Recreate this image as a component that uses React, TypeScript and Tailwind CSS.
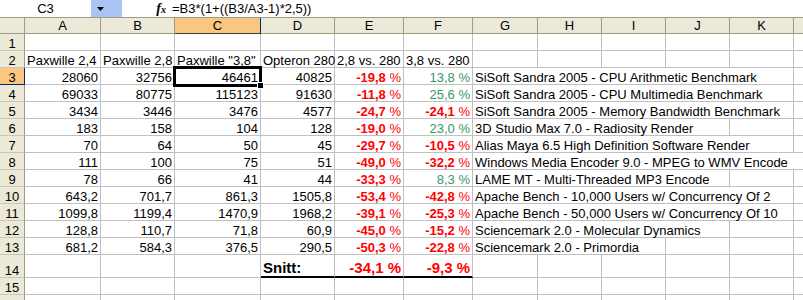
import { ReactNode } from "react";

type Pct = { v: string; neg: boolean };

type Row = {
    n: number;
    nums: string[];
    e: Pct;
    f: Pct;
    g: string;
    span: number;
};

const colHeads = [
    { k: "A", w: "w-[76px]" },
    { k: "B", w: "w-[74px]" },
    { k: "C", w: "w-[86px]" },
    { k: "D", w: "w-[74px]" },
    { k: "E", w: "w-[69px]" },
    { k: "F", w: "w-[69px]" },
    { k: "G", w: "w-[65px]" },
    { k: "H", w: "w-[64px]" },
    { k: "I", w: "w-[64px]" },
    { k: "J", w: "w-[64px]" },
    { k: "K", w: "w-[64px]" },
    { k: "L", w: "w-[64px]" },
];

// width of the G cell when its text runs over into the next columns
const spanW: Record<number, string> = {
    3: "w-[193px]",
    4: "w-[257px]",
    5: "w-[321px]",
    6: "w-[385px]",
};

const p = (v: string): Pct => ({ v, neg: v.startsWith("-") });

const rows: Row[] = [
    { n: 3, nums: ["28060", "32756", "46461", "40825"], e: p("-19,8"), f: p("13,8"), g: "SiSoft Sandra 2005 - CPU Arithmetic Benchmark", span: 5 },
    { n: 4, nums: ["69033", "80775", "115123", "91630"], e: p("-11,8"), f: p("25,6"), g: "SiSoft Sandra 2005 - CPU Multimedia Benchmark", span: 5 },
    { n: 5, nums: ["3434", "3446", "3476", "4577"], e: p("-24,7"), f: p("-24,1"), g: "SiSoft Sandra 2005 - Memory Bandwidth Benchmark", span: 5 },
    { n: 6, nums: ["183", "158", "104", "128"], e: p("-19,0"), f: p("23,0"), g: "3D Studio Max 7.0 - Radiosity Render", span: 4 },
    { n: 7, nums: ["70", "64", "50", "45"], e: p("-29,7"), f: p("-10,5"), g: "Alias Maya 6.5 High Definition Software Render", span: 5 },
    { n: 8, nums: ["111", "100", "75", "51"], e: p("-49,0"), f: p("-32,2"), g: "Windows Media Encoder 9.0 - MPEG to WMV Encode", span: 6 },
    { n: 9, nums: ["78", "66", "41", "44"], e: p("-33,3"), f: p("8,3"), g: "LAME MT - Multi-Threaded MP3 Encode", span: 4 },
    { n: 10, nums: ["643,2", "701,7", "861,3", "1505,8"], e: p("-53,4"), f: p("-42,8"), g: "Apache Bench - 10,000 Users w/ Concurrency Of 2", span: 5 },
    { n: 11, nums: ["1099,8", "1199,4", "1470,9", "1968,2"], e: p("-39,1"), f: p("-25,3"), g: "Apache Bench - 50,000 Users w/ Concurrency Of 10", span: 5 },
    { n: 12, nums: ["128,8", "110,7", "71,8", "60,9"], e: p("-45,0"), f: p("-15,2"), g: "Sciencemark 2.0 - Molecular Dynamics", span: 4 },
    { n: 13, nums: ["681,2", "584,3", "376,5", "290,5"], e: p("-50,3"), f: p("-22,8"), g: "Sciencemark 2.0 - Primordia", span: 3 },
];

function Cell(props: { w: string; right?: boolean; children?: ReactNode; extra?: string }) {
    const align = props.right ? "justify-end pr-[2px]" : "justify-start pl-[2px]";
    return (
        <div className={`${props.w} shrink-0 h-full flex items-end ${align} border-r border-b border-[#c0c0c0] leading-[13px] whitespace-nowrap ${props.extra ?? ""}`}>
            {props.children}
        </div>
    );
}

function RowHead(props: { n: number; active?: boolean }) {
    const cls = props.active
        ? "bg-[#f9c77f] border-r-[#0a246a] border-b-[#0a246a]"
        : "bg-[#ece9d8] border-r-[#9d9a88] border-b-[#c9c6b4]";
    return (
        <div className={`w-[25px] shrink-0 h-full flex items-end justify-center leading-[13px] border-r border-b ${cls}`}>
            {props.n}
        </div>
    );
}

function PctText(props: { pct: Pct }) {
    if (props.pct.neg) {
        return (
            <span className="text-[#ff0000]">
                <b>{props.pct.v}</b> %
            </span>
        );
    }
    return <span className="text-[#339966]">{props.pct.v} %</span>;
}

function FormulaBar() {
    return (
        <div className="h-[18px] flex items-stretch border-b border-[#9d9a88] bg-white">
            <div className="w-[91px] flex items-center justify-center leading-[13px]">C3</div>
            <div className="w-[31px] bg-[#a9c3f3] flex items-center pl-[6px]">
                <svg width="7" height="4" viewBox="0 0 7 4">
                    <path d="M0 0H7L3.5 4Z" fill="#000" />
                </svg>
            </div>
            <div className="w-[50px] flex items-center justify-end pr-[6px] font-['Liberation_Serif',serif] italic font-bold text-[14px] leading-[14px]">
                f<span className="text-[10px] leading-[10px] mt-[3px]">x</span>
            </div>
            <div className="flex items-center leading-[13px]">=B3*(1+((B3/A3-1)*2,5))</div>
        </div>
    );
}

function ColHeader() {
    return (
        <div className="h-[16px] flex">
            <div className="w-[25px] shrink-0 h-full bg-[#ece9d8] border-r border-b border-[#9d9a88]" />
            {colHeads.map((c) => {
                const cls = c.k === "C"
                    ? "bg-[#f9c77f] border-r-[#0a246a] border-b-[#3a3a3a]"
                    : "bg-[#ece9d8] border-r-[#9d9a88] border-b-[#9d9a88]";
                return (
                    <div key={c.k} className={`${c.w} shrink-0 h-full flex items-end justify-center leading-[13px] pb-[1px] border-r border-b ${cls}`}>
                        {c.k}
                    </div>
                );
            })}
        </div>
    );
}

function EmptyRow(props: { n: number }) {
    return (
        <div className="h-[17px] flex">
            <RowHead n={props.n} />
            {colHeads.map((c) => (
                <Cell key={c.k} w={c.w} />
            ))}
        </div>
    );
}

function DataRow(props: { r: Row }) {
    const r = props.r;
    const rest = colHeads.slice(6 + r.span);
    return (
        <div className="h-[17px] flex">
            <RowHead n={r.n} active={r.n === 3} />
            {r.nums.map((v, i) => (
                <Cell key={i} w={colHeads[i].w} right>
                    {v}
                </Cell>
            ))}
            <Cell w="w-[69px]" right>
                <PctText pct={r.e} />
            </Cell>
            <Cell w="w-[69px]" right>
                <PctText pct={r.f} />
            </Cell>
            <Cell w={spanW[r.span]}>{r.g}</Cell>
            {rest.map((c) => (
                <Cell key={c.k} w={c.w} />
            ))}
        </div>
    );
}

export default function App() {
    const heads = ["Paxwille 2,4", "Paxwille 2,8", 'Paxwille "3,8"', "Opteron 280", "2,8 vs. 280", "3,8 vs. 280"];
    return (
        <div className="relative w-[803px] h-[300px] overflow-hidden bg-white text-black text-[13px] font-['Liberation_Sans',Arial,sans-serif]">
            <FormulaBar />
            <ColHeader />
            <EmptyRow n={1} />
            <div className="h-[17px] flex">
                <RowHead n={2} />
                {colHeads.map((c, i) => (
                    <Cell key={c.k} w={c.w}>
                        {heads[i] ?? ""}
                    </Cell>
                ))}
            </div>
            {rows.map((r) => (
                <DataRow key={r.n} r={r} />
            ))}
            <div className="h-[23px] flex">
                <RowHead n={14} />
                <Cell w="w-[76px]" />
                <Cell w="w-[74px]" />
                <Cell w="w-[86px]" />
                <Cell w="w-[74px]" extra="border-b-2 border-b-black text-[15px] font-bold leading-[15px] pb-[1px]">
                    Snitt:
                </Cell>
                <Cell w="w-[69px]" right extra="border-b-2 border-b-black text-[15px] font-bold leading-[15px] pb-[1px] text-[#ff0000]">
                    -34,1 %
                </Cell>
                <Cell w="w-[69px]" right extra="border-b-2 border-b-black text-[15px] font-bold leading-[15px] pb-[1px] text-[#ff0000]">
                    -9,3 %
                </Cell>
                {colHeads.slice(6).map((c) => (
                    <Cell key={c.k} w={c.w} />
                ))}
            </div>
            <EmptyRow n={15} />
            <EmptyRow n={16} />

            {/* active cell C3 */}
            <div className="absolute left-[173px] top-[66px] w-[89px] h-[21px] border-[3px] border-black" />
            <div className="absolute left-[257px] top-[82px] w-[7px] h-[7px] bg-black border border-white" />
        </div>
    );
}
